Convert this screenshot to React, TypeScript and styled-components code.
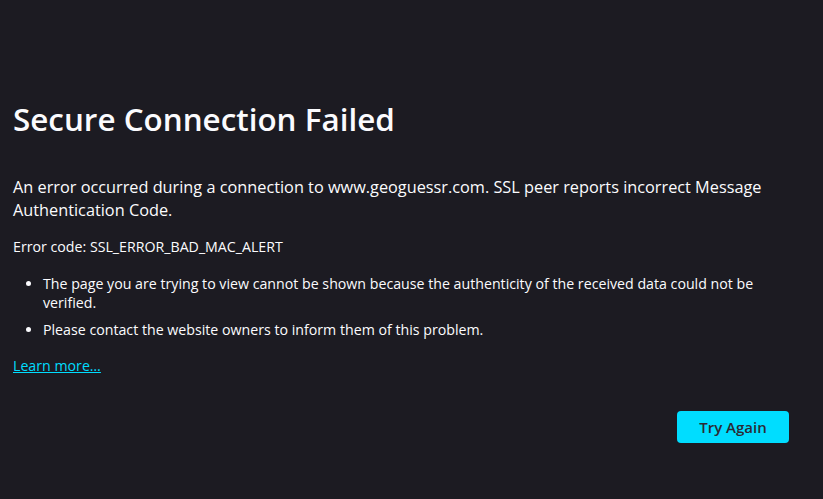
import React from 'react';
import styled, { createGlobalStyle } from 'styled-components';

const GlobalStyle = createGlobalStyle`
  html, body {
    margin: 0;
    background: #1c1b22;
    color: #fbfbfe;
    font-family: "Open Sans", "Noto Sans", sans-serif;
  }
`;

const Page = styled.main`
  min-height: 499px;
  box-sizing: border-box;
  padding: 99px 34px 0 13px;
`;

const Container = styled.div`
  max-width: 776px;
`;

const Title = styled.h1`
  font-size: 31.4px;
  font-weight: 600;
  line-height: 40px;
  margin: 0 0 37px;
`;

const Intro = styled.p`
  font-size: 16.3px;
  line-height: 23px;
  margin: 0 0 14.5px;
`;

const ErrorCode = styled.p`
  font-size: 14.2px;
  line-height: 20px;
  margin: 0 0 17.5px;
`;

const List = styled.ul`
  margin: 0 0 14.5px;
  padding-left: 30px;
  font-size: 14.2px;
  line-height: 19px;
`;

const Item = styled.li`
  & + & {
    margin-top: 8px;
  }
`;

const LearnMore = styled.a`
  display: inline-block;
  font-size: 14.2px;
  line-height: 20px;
  color: #00ddff;
  text-decoration: underline;
`;

const Actions = styled.div`
  display: flex;
  justify-content: flex-end;
  margin-top: 35px;
`;

const Button = styled.button`
  width: 112px;
  height: 32px;
  border: none;
  border-radius: 4px;
  background: #00ddff;
  color: #2b2a33;
  font-family: inherit;
  font-size: 15px;
  font-weight: 600;
  cursor: pointer;
`;

export default function App() {
  return (
    <>
      <GlobalStyle />
      <Page>
        <Container>
          <Title>Secure Connection Failed</Title>
          <Intro>
            An error occurred during a connection to www.geoguessr.com. SSL peer reports incorrect Message
            Authentication Code.
          </Intro>
          <ErrorCode>Error code: SSL_ERROR_BAD_MAC_ALERT</ErrorCode>
          <List>
            <Item>
              The page you are trying to view cannot be shown because the authenticity of the received data could not be
              verified.
            </Item>
            <Item>Please contact the website owners to inform them of this problem.</Item>
          </List>
          <LearnMore href="#">Learn more…</LearnMore>
          <Actions>
            <Button>Try Again</Button>
          </Actions>
        </Container>
      </Page>
    </>
  );
}
